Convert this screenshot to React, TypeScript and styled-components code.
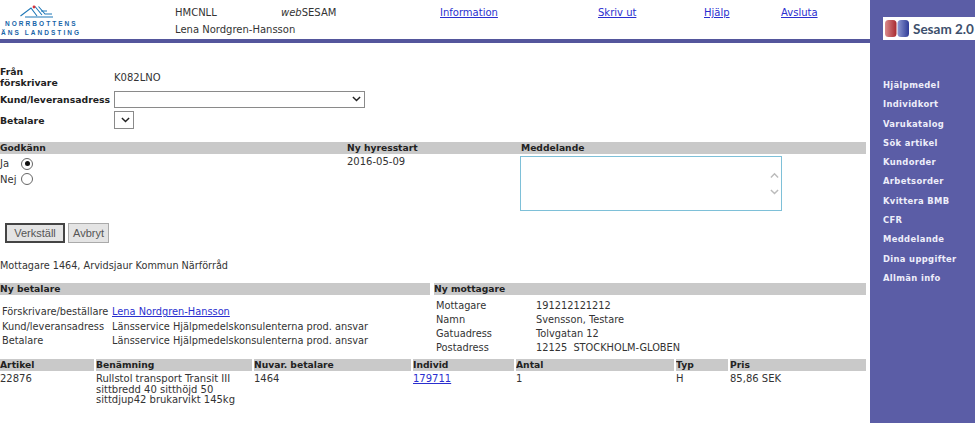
import React from "react";
import styled, { createGlobalStyle } from "styled-components";

const GlobalStyle = createGlobalStyle`
  html, body { margin: 0; padding: 0; background: #fff; }
  body { font-family: "DejaVu Sans", Verdana, sans-serif; font-size: 10px; color: #333; overflow: hidden; }
`;

const Page = styled.div`
  display: flex;
  width: 975px;
  height: 423px;
  overflow: hidden;
`;

const Main = styled.div`
  width: 870px;
  flex: none;
`;

const Header = styled.header`
  display: grid;
  grid-template-columns: 175px 106px 159px 158px 106px 77px 1fr;
  grid-template-rows: 19px 17px;
  height: 39px;
  border-bottom: 4px solid #54569c;
  line-height: 12px;
  > * { align-self: end; }
`;

const LogoBox = styled.div`
  grid-row: 1 / 3;
  align-self: start;
  padding-top: 5px;
  width: 80px;
  overflow: hidden;
  white-space: nowrap;
`;

const LogoLine = styled.div<{ $shift: number }>`
  font-family: "Liberation Sans", sans-serif;
  font-weight: 700;
  font-size: 6.5px;
  letter-spacing: 2.05px;
  line-height: 9px;
  color: #1765a8;
  margin-left: ${(p) => p.$shift}px;
`;

const Wide = styled.div`
  grid-column: 2 / 5;
`;

const Link = styled.a`
  color: #2a2fcf;
  text-decoration: underline;
`;

const Form = styled.div`
  display: grid;
  grid-template-columns: 114px 1fr;
  padding-top: 23px;
  align-items: center;
  row-gap: 3px;
`;

const Label = styled.div`
  font-size: 9.3px;
  font-weight: 700;
  color: #222;
  line-height: 11px;
  white-space: nowrap;
`;

const Select = styled.div<{ $w: number }>`
  width: ${(p) => p.$w}px;
  height: ${(p) => (p.$w > 100 ? 17 : 18)}px;
  box-sizing: border-box;
  border: 1px solid #8a8a8a;
  background: #fff;
  display: flex;
  align-items: center;
  justify-content: flex-end;
  padding-right: 3px;
`;

const Band = styled.div`
  background: #c9c9c9;
  height: 12px;
  line-height: 12px;
  font-size: 9.2px;
  font-weight: 700;
  color: #222;
  white-space: nowrap;
  overflow: hidden;
`;

const ApproveGrid = styled.div`
  display: grid;
  grid-template-columns: 347px 174px 345px;
  margin-top: 13px;
  width: 866px;
`;

const RadioRow = styled.div`
  display: grid;
  grid-template-columns: 22px 12px;
  align-items: center;
  height: 15.5px;
`;

const Radio = styled.span<{ $on?: boolean }>`
  width: 10px;
  height: 10px;
  margin-left: -1px;
  border-radius: 50%;
  border: 1px solid #666;
  display: flex;
  align-items: center;
  justify-content: center;
  &::after {
    content: "";
    width: 5px;
    height: 5px;
    border-radius: 50%;
    background: ${(p) => (p.$on ? "#111" : "transparent")};
  }
`;

const Column = styled.div`
  padding-top: 2px;
`;

const MessageBox = styled.div`
  width: 262px;
  height: 55px;
  box-sizing: border-box;
  border: 1px solid #7ec0d8;
  margin-top: 2px;
  margin-left: -1px;
  display: flex;
  flex-direction: column;
  align-items: flex-end;
  justify-content: center;
  gap: 10px;
  padding-right: 2px;
`;

const Actions = styled.div`
  display: flex;
  gap: 3px;
  padding: 12px 0 0 5px;
`;

const Button = styled.button<{ $primary?: boolean }>`
  height: 20px;
  width: ${(p) => (p.$primary ? 60 : 41)}px;
  padding: 0;
  box-sizing: border-box;
  font-family: "Liberation Sans", sans-serif;
  font-size: 11px;
  color: #555;
  background: #e4e4e4;
  border: ${(p) => (p.$primary ? "2px solid #444" : "1px solid #aaa")};
`;

const Receiver = styled.div`
  margin-top: 17px;
  font-size: 9.7px;
  line-height: 12px;
`;

const TwoPanels = styled.div`
  display: grid;
  grid-template-columns: 430px 432px;
  column-gap: 4px;
  margin-top: 11px;
  width: 866px;
`;

const InfoGrid = styled.div<{ $cols: string; $pad: number; $row: number }>`
  display: grid;
  grid-template-columns: ${(p) => p.$cols};
  grid-auto-rows: ${(p) => p.$row}px;
  padding: ${(p) => p.$pad}px 0 0 2px;
  font-size: 9.8px;
  line-height: 12px;
  align-items: center;
  white-space: nowrap;
`;

const ItemTable = styled.div`
  display: grid;
  grid-template-columns: 94px 156px 157px 101px 158px 52px 136px;
  column-gap: 2px;
  width: 866px;
  margin-top: 4px;
`;

const Cell = styled.div`
  padding-top: 3px;
  line-height: 10.7px;
  white-space: nowrap;
`;

const Sidebar = styled.nav`
  width: 105px;
  flex: none;
  background: #5b5da6;
  padding-top: 17px;
`;

const Brand = styled.div`
  margin-left: 13px;
  height: 23px;
  background: #fff;
  display: flex;
  align-items: center;
  gap: 4px;
  padding-left: 2px;
  overflow: hidden;
`;

const BrandText = styled.span`
  font-family: Lato, sans-serif;
  font-size: 13.5px;
  font-weight: 700;
  color: #3d4f6c;
  white-space: nowrap;
`;

const Menu = styled.ul`
  list-style: none;
  margin: 0;
  padding: 36px 0 0 13px;
`;

const MenuItem = styled.li`
  height: 19.3px;
  line-height: 19.3px;
  font-size: 8.4px;
  font-weight: 700;
  letter-spacing: 0.35px;
  color: #eeeefa;
  white-space: nowrap;
`;

const menu = [
  "Hjälpmedel",
  "Individkort",
  "Varukatalog",
  "Sök artikel",
  "Kundorder",
  "Arbetsorder",
  "Kvittera BMB",
  "CFR",
  "Meddelande",
  "Dina uppgifter",
  "Allmän info",
];

const Chevron = ({ up, color, size = 9 }: { up?: boolean; color: string; size?: number }) => (
  <svg width={size} height={size * 0.7} viewBox="0 0 10 7">
    <path d={up ? "M1 6 L5 2 L9 6" : "M1 1 L5 5 L9 1"} fill="none" stroke={color} strokeWidth="1.6" />
  </svg>
);

const RegionMark = () => (
  <svg width="34" height="14" viewBox="0 0 34 14" style={{ display: "block", marginLeft: 20 }}>
    <path d="M0.5 11 L11 3 L17 11 M15 1.5 L22 10 M18.5 1.5 L25 9 H32 M5 12 H33" fill="none" stroke="#1f78b8" strokeWidth="1.1" />
    <path d="M21 6 H27" fill="none" stroke="#1f78b8" strokeWidth="1" />
    <circle cx="14" cy="2" r="1.4" fill="#d8343a" />
  </svg>
);

const SesamMark = () => (
  <svg width="24" height="17" viewBox="0 0 24 17" style={{ flex: "none" }}>
    <defs>
      <linearGradient id="redBlock" x1="0" x2="1" y1="0" y2="0">
        <stop offset="0" stopColor="#d98a8c" />
        <stop offset="1" stopColor="#a82a30" />
      </linearGradient>
      <linearGradient id="blueBlock" x1="0" x2="1" y1="0" y2="0">
        <stop offset="0" stopColor="#8d97d0" />
        <stop offset="1" stopColor="#2f3c98" />
      </linearGradient>
    </defs>
    <rect x="0" y="0" width="11.5" height="17" rx="3.5" fill="url(#redBlock)" />
    <rect x="12.5" y="0" width="11.5" height="17" rx="3.5" fill="url(#blueBlock)" />
  </svg>
);

export default function App() {
  return (
    <Page>
      <GlobalStyle />
      <Main>
        <Header>
          <LogoBox>
            <RegionMark />
            <LogoLine $shift={5}>NORRBOTTENS</LogoLine>
            <LogoLine $shift={1}>ÄNS LANDSTING</LogoLine>
          </LogoBox>
          <div>HMCNLL</div>
          <div><i>web</i>SESAM</div>
          <div><Link>Information</Link></div>
          <div><Link>Skriv ut</Link></div>
          <div><Link>Hjälp</Link></div>
          <div><Link>Avsluta</Link></div>
          <Wide>Lena Nordgren-Hansson</Wide>
        </Header>

        <Form>
          <Label>Från<br />förskrivare</Label>
          <div>K082LNO</div>
          <Label>Kund/leveransadress</Label>
          <Select $w={251}><Chevron color="#222" /></Select>
          <Label>Betalare</Label>
          <Select $w={20}><Chevron color="#222" /></Select>
        </Form>

        <ApproveGrid>
          <Band>Godkänn</Band>
          <Band>Ny hyresstart</Band>
          <Band>Meddelande</Band>
          <Column>
            <RadioRow>Ja<Radio $on /></RadioRow>
            <RadioRow>Nej<Radio /></RadioRow>
          </Column>
          <Column>2016-05-09</Column>
          <MessageBox>
            <Chevron up color="#bbb" />
            <Chevron color="#bbb" />
          </MessageBox>
        </ApproveGrid>

        <Actions>
          <Button $primary>Verkställ</Button>
          <Button>Avbryt</Button>
        </Actions>

        <Receiver>Mottagare 1464, Arvidsjaur Kommun Närförråd</Receiver>

        <TwoPanels>
          <div>
            <Band>Ny betalare</Band>
            <InfoGrid $cols="110px 1fr" $pad={10} $row={14.5}>
              <div>Förskrivare/beställare</div><div><Link>Lena Nordgren-Hansson</Link></div>
              <div>Kund/leveransadress</div><div>Länsservice Hjälpmedelskonsulenterna prod. ansvar</div>
              <div>Betalare</div><div>Länsservice Hjälpmedelskonsulenterna prod. ansvar</div>
            </InfoGrid>
          </div>
          <div>
            <Band>Ny mottagare</Band>
            <InfoGrid $cols="100px 1fr" $pad={4} $row={14}>
              <div>Mottagare</div><div>191212121212</div>
              <div>Namn</div><div>Svensson, Testare</div>
              <div>Gatuadress</div><div>Tolvgatan 12</div>
              <div>Postadress</div><div>12125&nbsp; STOCKHOLM-GLOBEN</div>
            </InfoGrid>
          </div>
        </TwoPanels>

        <ItemTable>
          <Band>Artikel</Band>
          <Band>Benämning</Band>
          <Band>Nuvar. betalare</Band>
          <Band>Individ</Band>
          <Band>Antal</Band>
          <Band>Typ</Band>
          <Band>Pris</Band>
          <Cell>22876</Cell>
          <Cell>Rullstol transport Transit III<br />sittbredd 40 sitthöjd 50<br />sittdjup42 brukarvikt 145kg</Cell>
          <Cell>1464</Cell>
          <Cell><Link>179711</Link></Cell>
          <Cell>1</Cell>
          <Cell>H</Cell>
          <Cell>85,86 SEK</Cell>
        </ItemTable>
      </Main>

      <Sidebar>
        <Brand>
          <SesamMark />
          <BrandText>Sesam 2.0</BrandText>
        </Brand>
        <Menu>
          {menu.map((m) => (
            <MenuItem key={m}>{m}</MenuItem>
          ))}
        </Menu>
      </Sidebar>
    </Page>
  );
}
